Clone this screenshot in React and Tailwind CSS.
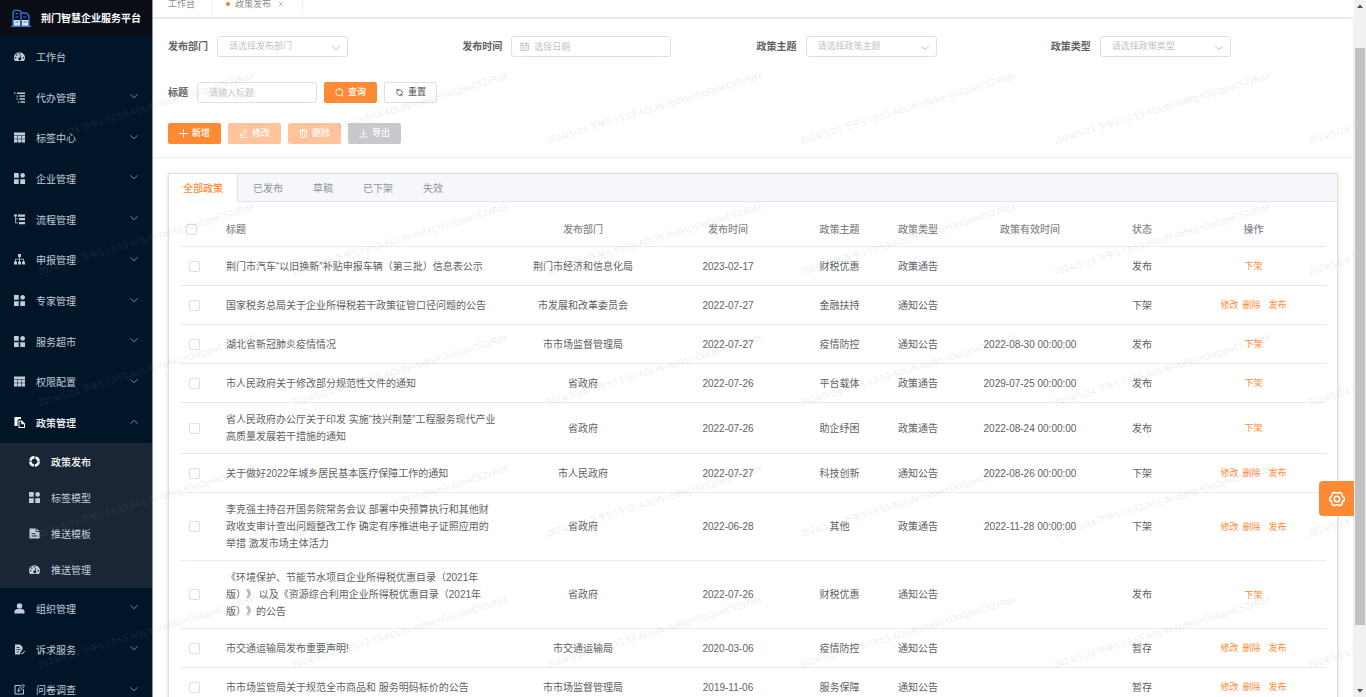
import React from "react";

function Svg({ children, className = "size-[11px]", box = "0 0 22 22" }) {
  return (
    <svg viewBox={box} className={`shrink-0 ${className}`} fill="currentColor" aria-hidden="true">
      {children}
    </svg>
  );
}

const stroke = { fill: "none", stroke: "currentColor", strokeLinecap: "round", strokeLinejoin: "round" };

const icons = {
  gauge: (
    <Svg>
      <path
        fillRule="evenodd"
        d="M11 2.5A11 11 0 0 0 0 13.5c0 2.1.6 4.200 1.700 5.900.3.400.7.600 1.100.600h16.400c.4 0 .8-.2 1.100-.6A11 11 0 0 0 11 2.500zM11 4a1.600 1.600 0 1 1 0 3.200A1.600 1.600 0 0 1 11 4zM5.300 6.400a1.600 1.600 0 1 1 0 3.200 1.600 1.600 0 0 1 0-3.200zM3.200 12a1.600 1.600 0 1 1 0 3.200 1.600 1.600 0 0 1 0-3.200zm15.600 0a1.600 1.600 0 1 1 0 3.200 1.600 1.600 0 0 1 0-3.200zm-5.500-4.200l1.300.4-1.500 5.300a2.700 2.700 0 1 1-1.600-.4z"
      />
    </Svg>
  ),
  list: (
    <Svg>
      <path d="M0 1h3v2.500H0zM6 1h16v3H6zM5 7h2.500v2.500H5zM11 6.500h11v3H11zM5 13h2.500v2.500H5zM11 12.500h11v3H11zM8 19h2.500v2.500H8zM13 18.500h9v3h-9z" />
    </Svg>
  ),
  table: (
    <Svg>
      <path d="M0 1h22v5H0zM0 7h6.700v6.500H0zM7.700 7h6.600v6.500H7.700zM15.300 7H22v6.500h-6.700zM0 14.500h6.700V21H0zM7.700 14.500h6.600V21H7.700zM15.300 14.500H22V21h-6.700z" />
    </Svg>
  ),
  blocks: (
    <Svg box="0 0 128 128">
      <path d="M0 0h54.857v54.857H0V0zm0 73.143h54.857V128H0V73.143zm73.143 0H128V128H73.143V73.143zm27.428-18.286C115.72 54.857 128 42.577 128 27.43 128 12.28 115.72 0 100.571 0 85.423 0 73.143 12.28 73.143 27.429c0 15.148 12.28 27.428 27.428 27.428z" />
    </Svg>
  ),
  treeTable: (
    <Svg>
      <path d="M0 1h6v4H4v4h4v1.500H4V17h4v1.500H2.500V5H0zM8 1h14v4.500H8zM10 8h12v4.500H10zM10 16h12v4.500H10z" />
    </Svg>
  ),
  tree: (
    <Svg>
      <path d="M8 0h6v6h-2.200v3.500h7.700V15H22v6h-6v-6h2v-4h-6.200v4H14v6H8v-6h2.200v-4H4v4h2v6H0v-6h2.500V9.500h7.700V6H8z" />
    </Svg>
  ),
  clipboard: (
    <Svg>
      <path d="M1 0h13v4h-4.500L7 7v11H1z" />
      <path fillRule="evenodd" d="M9 7h7l6 6v9H9zM11 9v11h9v-5.500h-5.500V9z" />
    </Svg>
  ),
  ring: (
    <Svg>
      <circle cx="11" cy="11" r="8.300" fill="none" stroke="currentColor" strokeWidth="5" strokeDasharray="11 2.040" strokeDashoffset="-1" />
    </Svg>
  ),
  doc: (
    <Svg>
      <path fillRule="evenodd" d="M1 1h12.500v7H21v13H1zM5 10.500v1.800h8v-1.800zM5 15v1.800h12V15zM15 1l6 5.500h-6z" />
    </Svg>
  ),
  user: (
    <Svg>
      <circle cx="11" cy="6" r="5.500" />
      <path d="M1 21v-4c0-3 3-5 6-5h8c3 0 6 2 6 5v4z" />
    </Svg>
  ),
  docEdit: (
    <Svg>
      <path fillRule="evenodd" d="M2 1h10l5 5v5l-5 6v4H2zM5 6v1.700h6V6zM5 10.500v1.700h8v-1.700zM5 15v1.700h5V15z" />
      <path d="M14 17.500l2.500 2.500 5-6" {...stroke} strokeWidth="2" />
    </Svg>
  ),
  edit: (
    <Svg>
      <path d="M12 3H2v17h17v-9M8 14l1-4 9-9 3 3-9 9z" {...stroke} strokeWidth="2" />
    </Svg>
  ),
};

function Chevron({ up, className = "" }) {
  return (
    <svg viewBox="0 0 8 8" className={`size-2 shrink-0 ${className}`} aria-hidden="true">
      <path d={up ? "M.7 5.500L4 2.200l3.300 3.300" : "M.7 2.500L4 5.800l3.300-3.300"} {...stroke} strokeWidth=".9" />
    </svg>
  );
}

const menuTop = [
  ["gauge", "工作台"],
  ["list", "代办管理", true],
  ["table", "标签中心", true],
  ["blocks", "企业管理", true],
  ["treeTable", "流程管理", true],
  ["tree", "申报管理", true],
  ["blocks", "专家管理", true],
  ["blocks", "服务超市", true],
  ["table", "权限配置", true],
  ["clipboard", "政策管理", true, true],
];
const menuSub = [
  ["ring", "政策发布", true],
  ["blocks", "标签模型"],
  ["doc", "推送模板"],
  ["gauge", "推送管理"],
];
const menuBottom = [
  ["user", "组织管理", true],
  ["docEdit", "诉求服务", true],
  ["edit", "问卷调查", true],
];

function MenuItem({ icon, label, arrow, open }) {
  return (
    <a
      href="#"
      className={`flex flex-1 items-center px-[14px] ${open ? "font-medium text-white" : "text-[#c3cdd9]"}`}
    >
      {icons[icon]}
      <span className="ml-[11px] flex-1 pt-[3px]">{label}</span>
      {arrow && <Chevron up={open} className="mb-[2px] text-[#8a94a1]" />}
    </a>
  );
}

function Sidebar() {
  return (
    <aside className="flex w-[153px] shrink-0 flex-col overflow-hidden border-r border-[#8d959e] bg-[#001528] text-[10px] leading-4">
      <div className="flex h-9 shrink-0 items-center bg-[#0a0d16] pl-[11px] text-white">
        <svg viewBox="0 0 60 54" className="h-[18px] w-5 shrink-0" aria-hidden="true">
          <path d="M6 50V12q0-8 8-8h8q8 0 8 8v22M30 12h12q10 0 12 12v26M6 34v16M1 52h58" fill="none" stroke="#2f78dc" strokeWidth="4" strokeLinecap="round" />
          <path d="M13 14h9M13 24h9M36 24h10" stroke="#2f78dc" strokeWidth="3" />
          <path d="M8 33h20v17H8zM32 33h20v17H32z" fill="#cfe4ff" />
          <path d="M13 39h10M37 39h10" stroke="#2f78dc" strokeWidth="3" />
        </svg>
        <h1 className="ml-[10px] pt-[2px] font-bold whitespace-nowrap">荆门智慧企业服务平台</h1>
      </div>
      <nav className="flex shrink-0 flex-col">
        <div className="flex h-[407px] flex-col">
          {menuTop.map(([icon, label, arrow, open]) => (
            <MenuItem key={label} icon={icon} label={label} arrow={arrow} open={open} />
          ))}
        </div>
        <div className="flex h-[145px] flex-col bg-[#1a2535]">
          {menuSub.map(([icon, label, active]) => (
            <a
              key={label}
              href="#"
              className={`flex flex-1 items-center pl-[29px] ${active ? "font-medium text-white" : "text-[#c3cdd9]"}`}
            >
              {icons[icon]}
              <span className="ml-[11px] pt-[3px]">{label}</span>
            </a>
          ))}
        </div>
        <div className="flex h-[122px] flex-col">
          {menuBottom.map(([icon, label, arrow]) => (
            <MenuItem key={label} icon={icon} label={label} arrow={arrow} />
          ))}
        </div>
      </nav>
    </aside>
  );
}

function Field({ id, label, children }) {
  return (
    <div className="flex items-center gap-[9px]">
      <label htmlFor={id} className="text-[10px] leading-4 font-bold whitespace-nowrap text-[#606266]">
        {label}
      </label>
      {children}
    </div>
  );
}

function SelectField({ id, label, placeholder }) {
  return (
    <Field id={id} label={label}>
      <div className="relative">
        <select
          id={id}
          className="block h-[21px] w-[131px] appearance-none rounded-[3px] border border-[#dcdfe6] bg-white pr-5 pl-[11px] text-[9px] text-[#c0c4cc]"
        >
          <option>{placeholder}</option>
        </select>
        <Chevron className="pointer-events-none absolute top-2 right-2 text-[#b4b8c0]" />
      </div>
    </Field>
  );
}

function Button({ tone, icon, children, disabled }) {
  return (
    <button
      type="button"
      disabled={disabled}
      className={`flex h-[21px] w-[53px] items-center justify-center gap-1 rounded-[2px] border text-[9px] font-medium ${tone}`}
    >
      <svg viewBox="0 0 18 18" className="size-[9px]" {...stroke} strokeWidth="1.800" aria-hidden="true">
        {icon}
      </svg>
      {children}
    </button>
  );
}

const orange = "border-[#ff8a35] bg-[#ff8a35] text-white";
const paleOrange = "border-[#ffc49b] bg-[#ffc49b] text-white";
const gray = "border-[#c8c9cc] bg-[#c8c9cc] text-white";
const plain = "border-[#dcdfe6] bg-white text-[#606266]";

function Filters() {
  return (
    <section className="border-b border-[#eff1f7] pt-[17px] pr-2 pb-[13px] pl-[15px]">
      <div className="grid grid-cols-4">
        <SelectField id="dept" label="发布部门" placeholder="请选择发布部门" />
        <Field id="date" label="发布时间">
          <div className="relative">
            <input
              id="date"
              placeholder="选择日期"
              className="block h-[21px] w-[160px] rounded-[3px] border border-[#dcdfe6] pl-[22px] text-[9px] placeholder:text-[#c0c4cc]"
            />
            <svg
              viewBox="0 0 18 18"
              className="pointer-events-none absolute top-[6px] left-[9px] size-[9px] text-[#c0c4cc]"
              {...stroke}
              strokeWidth="1.600"
              aria-hidden="true"
            >
              <path d="M1 3h16v14H1zM1 7h16M5 1v4M13 1v4M4 10.500h10M4 14h10" />
            </svg>
          </div>
        </Field>
        <SelectField id="topic" label="政策主题" placeholder="请选择政策主题" />
        <SelectField id="kind" label="政策类型" placeholder="请选择政策类型" />
      </div>
      <div className="mt-[25px] flex items-center gap-[7px]">
        <Field id="title" label="标题">
          <input
            id="title"
            placeholder="请输入标题"
            className="block h-[21px] w-[120px] rounded-[3px] border border-[#dcdfe6] pl-[11px] text-[9px] placeholder:text-[#c0c4cc]"
          />
        </Field>
        <Button tone={orange} icon={<path d="M8.500 1.500a7 7 0 1 1 0 14 7 7 0 0 1 0-14zM14 14l2.500 2.500" />}>
          查询
        </Button>
        <Button tone={plain} icon={<path d="M4 5a6.500 6.500 0 0 1 11 5M14 13a6.500 6.500 0 0 1-11-5M4 2v3.500h3.500M14 16v-3.500h-3.500" />}>
          重置
        </Button>
      </div>
      <div className="mt-5 flex gap-[7px]">
        <Button tone={orange} icon={<path d="M9 1v16M1 9h16" />}>
          新增
        </Button>
        <Button tone={paleOrange} disabled icon={<path d="M3 13l1-4 8-8 4 3.500-8 8zM2 17h14" />}>
          修改
        </Button>
        <Button tone={paleOrange} disabled icon={<path d="M1 4h16M3 4v13h12V4M6 4V1h6v3M7 8v5M11 8v5" />}>
          删除
        </Button>
        <Button tone={gray} disabled icon={<path d="M9 2v10M5 8l4 4 4-4M2 16h14" />}>
          导出
        </Button>
      </div>
    </section>
  );
}

const rows = [
  ["荆门市汽车“以旧换新”补贴申报车辆（第三批）信息表公示", "荆门市经济和信息化局", "2023-02-17", "财税优惠", "政策通告", "", "发布"],
  ["国家税务总局关于企业所得税若干政策征管口径问题的公告", "市发展和改革委员会", "2022-07-27", "金融扶持", "通知公告", "", "下架"],
  ["湖北省新冠肺炎疫情情况", "市市场监督管理局", "2022-07-27", "疫情防控", "通知公告", "2022-08-30 00:00:00", "发布"],
  ["市人民政府关于修改部分规范性文件的通知", "省政府", "2022-07-26", "平台载体", "政策通告", "2029-07-25 00:00:00", "发布"],
  ["省人民政府办公厅关于印发 实施“技兴荆楚”工程服务现代产业高质量发展若干措施的通知", "省政府", "2022-07-26", "助企纾困", "政策通告", "2022-08-24 00:00:00", "发布"],
  ["关于做好2022年城乡居民基本医疗保障工作的通知", "市人民政府", "2022-07-27", "科技创新", "通知公告", "2022-08-26 00:00:00", "下架"],
  ["李克强主持召开国务院常务会议 部署中央预算执行和其他财政收支审计查出问题整改工作 确定有序推进电子证照应用的举措 激发市场主体活力", "省政府", "2022-06-28", "其他", "政策通告", "2022-11-28 00:00:00", "下架"],
  ["《环境保护、节能节水项目企业所得税优惠目录（2021年版）》 以及《资源综合利用企业所得税优惠目录（2021年版）》的公告", "省政府", "2022-07-26", "财税优惠", "通知公告", "", "发布"],
  ["市交通运输局发布重要声明!", "市交通运输局", "2020-03-06", "疫情防控", "通知公告", "", "暂存"],
  ["市市场监管局关于规范全市商品和 服务明码标价的公告", "市市场监督管理局", "2019-11-06", "服务保障", "通知公告", "", "暂存"],
];

function Check({ label }) {
  return (
    <input
      type="checkbox"
      aria-label={label}
      className="block size-[11px] appearance-none rounded-[2px] border border-[#dcdfe6] bg-white"
    />
  );
}

function PolicyTable() {
  return (
    <table className="w-full table-fixed border-separate border-spacing-0 text-[10px] leading-[17px] text-[#606266] [text-spacing-trim:space-all]">
      <colgroup>
        <col className="w-[39px]" />
        <col className="w-[291px]" />
        <col className="w-[146px]" />
        <col className="w-[144px]" />
        <col className="w-[79px]" />
        <col className="w-[78px]" />
        <col className="w-[146px]" />
        <col className="w-[78px]" />
        <col className="w-[145px]" />
      </colgroup>
      <thead>
        <tr className="h-[34px] text-[#85888e] [&>th]:border-b [&>th]:border-[#e8ebf1] [&>th]:font-medium">
          <th className="pl-[6px]">
            <Check label="全选" />
          </th>
          <th className="pl-[7px] text-left">标题</th>
          {["发布部门", "发布时间", "政策主题", "政策类型", "政策有效时间", "状态", "操作"].map((h) => (
            <th key={h}>{h}</th>
          ))}
        </tr>
      </thead>
      <tbody>
        {rows.map(([title, ...cells]) => (
          <tr key={title} className="h-[39px] [&>td]:border-b [&>td]:border-[#e8ebf1] [&>td]:py-2">
            <td className="pl-[9px]">
              <Check label={title} />
            </td>
            <td className="pr-3 pl-[7px]">{title}</td>
            {cells.map((c, i) => (
              <td key={i} className="text-center whitespace-nowrap">
                {c}
              </td>
            ))}
            <td>
              <div className="flex justify-center gap-1 pt-px text-[9px] text-[#ff8a35]">
                {cells[5] === "发布" ? (
                  <button type="button">下架</button>
                ) : (
                  <>
                    <button type="button">修改</button>
                    <button type="button">删除</button>
                    <button type="button" className="ml-1">发布</button>
                  </>
                )}
              </div>
            </td>
          </tr>
        ))}
      </tbody>
    </table>
  );
}

function Watermark() {
  return (
    <div
      aria-hidden="true"
      className="pointer-events-none absolute top-[15px] right-3 bottom-0 left-0 grid auto-rows-[131px] grid-cols-[repeat(6,254px)] overflow-hidden font-['Open_Sans','Noto_Sans_CJK_SC',sans-serif] text-[9px] leading-[10px] text-[#8c8c8c]/20"
    >
      {Array.from({ length: 36 }, (_, i) => (
        <div key={i} className="flex items-end overflow-hidden pl-10">
          <span className="origin-bottom-left -rotate-17 whitespace-nowrap">
            2024/5/24 下午5:13:53-AOLIN-rb8ktj+OoQpwC52VRdX
          </span>
        </div>
      ))}
    </div>
  );
}

function ScrollRail() {
  return (
    <div aria-hidden="true" className="flex w-3 shrink-0 flex-col items-center bg-[#f1f1f1] pt-1 pb-1">
      <svg viewBox="0 0 6 4" className="h-1 w-[6px]">
        <path d="M0 4l3-3.500L6 4z" fill="#505050" />
      </svg>
      <div className="mt-10 w-[10px] grow-[577] basis-0 bg-[#c1c1c1]" />
      <div className="grow-[64] basis-0" />
      <svg viewBox="0 0 6 4" className="h-1 w-[6px]">
        <path d="M0 0l3 3.500L6 0z" fill="#505050" />
      </svg>
    </div>
  );
}

export default function App() {
  return (
    <div className="relative flex h-screen overflow-hidden bg-white font-['Liberation_Sans','Noto_Sans_CJK_SC',sans-serif]">
      <Sidebar />
      <div className="flex min-w-0 flex-1 flex-col">
        <div className="flex shrink-0 items-start border-b-2 border-[#e6ebf0] pb-[2px] text-[9px] leading-[9px] text-[#8b8e94]">
          <a href="#" className="h-[15px] border-r border-[#eef0f3] pr-4 pl-[15px]">
            工作台
          </a>
          <a href="#" className="flex h-[15px] items-start border-r border-[#eef0f3] pr-[19px] pl-[14px]">
            <span className="mt-[2px] mr-[5px] size-1 rounded-full bg-[#ff7a1f]" />
            政策发布
            <svg viewBox="0 0 8 8" className="mt-[2px] ml-2 size-1" {...stroke} strokeWidth="1.200" aria-hidden="true">
              <path d="M1 1l6 6M7 1L1 7" />
            </svg>
          </a>
        </div>
        <main className="min-h-0 flex-1 overflow-hidden border-r border-[#eceef3]">
          <Filters />
          <section className="mx-[15px] mt-[15px] border border-[#dcdfe6] bg-white shadow-[0_1px_4px_rgba(0,0,0,0.14)]">
            <div role="tablist" className="flex h-7 border-b border-[#e1e4ea] bg-[#f5f7fa] text-[10px] text-[#909399] [&>button]:-mb-px">
              <button
                type="button"
                role="tab"
                aria-selected="true"
                className="border-r border-[#dcdfe6] bg-white px-[14px] font-medium text-[#ff8a35]"
              >
                全部政策
              </button>
              {["已发布", "草稿", "已下架", "失效"].map((t) => (
                <button key={t} type="button" role="tab" aria-selected="false" className="px-[15px]">
                  {t}
                </button>
              ))}
            </div>
            <div className="px-[11px] pt-[11px] pb-4">
              <PolicyTable />
            </div>
          </section>
        </main>
      </div>
      <ScrollRail />
      <button
        type="button"
        aria-label="设置"
        className="absolute top-[481px] right-3 flex size-[35px] items-center justify-center rounded-l-[4px] bg-[#ff8a35] text-white"
      >
        <svg viewBox="0 0 32 32" className="size-4" {...stroke} strokeWidth="3" aria-hidden="true">
          <path d="M11 2.500q5 4 10 0l4.500 2.500q0 6 5 8.500v5q-5 2.500-5 8.500l-4.500 2.500q-5-4-10 0l-4.500-2.500q0-6-5-8.500v-5q5-2.500 5-8.500z" />
          <circle cx="16" cy="16" r="5.500" />
        </svg>
      </button>
      <Watermark />
    </div>
  );
}
